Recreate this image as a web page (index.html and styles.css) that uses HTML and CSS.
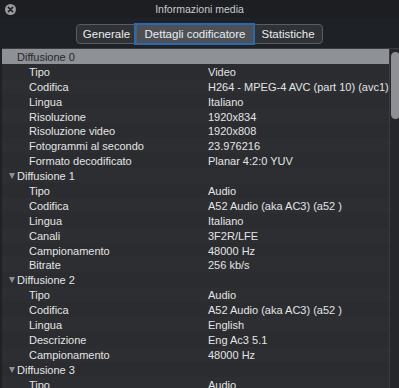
FILE: index.html
```html
<!DOCTYPE html>
<html lang="it">
<head>
<meta charset="utf-8">
<title>Informazioni media</title>
<link rel="stylesheet" href="styles.css">
</head>
<body>
<div class="window">
  <div class="titlebar">
    <div class="tb-left">
      <span class="close">
        <svg width="11" height="11" viewBox="0 0 11 11"><circle cx="5.5" cy="5.5" r="5.5" fill="#9a9ca0"/><path d="M3.4 3.4 L7.6 7.6 M7.6 3.4 L3.4 7.6" stroke="#1e2126" stroke-width="1.6" stroke-linecap="round"/></svg>
      </span>
    </div>
    <div class="title">Informazioni media</div>
    <div></div>
  </div>
  <div class="toolbar">
    <div class="segmented">
      <span class="seg s1">Generale</span>
      <span class="seg s2 active">Dettagli codificatore</span>
      <span class="seg s3">Statistiche</span>
    </div>
  </div>
  <div class="content">
    <div class="outline">
      <div class="row group selected"><span class="disc"></span><span class="k">Diffusione 0</span><span class="v"></span></div>
      <div class="row"><span class="k">Tipo</span><span class="v">Video</span></div>
      <div class="row"><span class="k">Codifica</span><span class="v">H264 - MPEG-4 AVC (part 10) (avc1)</span></div>
      <div class="row"><span class="k">Lingua</span><span class="v">Italiano</span></div>
      <div class="row"><span class="k">Risoluzione</span><span class="v">1920x834</span></div>
      <div class="row"><span class="k">Risoluzione video</span><span class="v">1920x808</span></div>
      <div class="row"><span class="k">Fotogrammi al secondo</span><span class="v">23.976216</span></div>
      <div class="row"><span class="k">Formato decodificato</span><span class="v">Planar 4:2:0 YUV</span></div>
      <div class="row group"><span class="disc"></span><span class="k">Diffusione 1</span><span class="v"></span></div>
      <div class="row"><span class="k">Tipo</span><span class="v">Audio</span></div>
      <div class="row"><span class="k">Codifica</span><span class="v">A52 Audio (aka AC3) (a52 )</span></div>
      <div class="row"><span class="k">Lingua</span><span class="v">Italiano</span></div>
      <div class="row"><span class="k">Canali</span><span class="v">3F2R/LFE</span></div>
      <div class="row"><span class="k">Campionamento</span><span class="v">48000 Hz</span></div>
      <div class="row"><span class="k">Bitrate</span><span class="v">256 kb/s</span></div>
      <div class="row group"><span class="disc"></span><span class="k">Diffusione 2</span><span class="v"></span></div>
      <div class="row"><span class="k">Tipo</span><span class="v">Audio</span></div>
      <div class="row"><span class="k">Codifica</span><span class="v">A52 Audio (aka AC3) (a52 )</span></div>
      <div class="row"><span class="k">Lingua</span><span class="v">English</span></div>
      <div class="row"><span class="k">Descrizione</span><span class="v">Eng Ac3 5.1</span></div>
      <div class="row"><span class="k">Campionamento</span><span class="v">48000 Hz</span></div>
      <div class="row group"><span class="disc"></span><span class="k">Diffusione 3</span><span class="v"></span></div>
      <div class="row"><span class="k">Tipo</span><span class="v">Audio</span></div>
    </div>
    <div class="scrollbar"><div class="thumb"></div></div>
  </div>
</div>
</body>
</html>
```

FILE: styles.css
```css
* { box-sizing: border-box; }
html, body {
  margin: 0;
  padding: 0;
  height: 100%;
  overflow: hidden;
  background: #1e2126;
}
body {
  font-family: "Liberation Sans", Arial, sans-serif;
  font-size: 11px;
  color: #e4e4e4;
}
.window {
  display: flex;
  flex-direction: column;
  height: 388px;
  background: #1e2126;
}
.titlebar {
  height: 18px;
  display: grid;
  grid-template-columns: 1fr auto 1fr;
  align-items: center;
  background: #1c1e22;
}
.tb-left {
  display: flex;
  align-items: center;
  padding-left: 5px;
}
.close {
  display: flex;
  width: 11px;
  height: 11px;
}
.title {
  color: #c9cacc;
  font-size: 10.5px;
}
.toolbar {
  height: 30px;
  display: flex;
  justify-content: center;
  align-items: flex-start;
  padding-top: 6px;
}
.segmented {
  display: flex;
  height: 20px;
  border: 1px solid #5a5c61;
  border-radius: 4px;
  background: #2f3236;
}
.seg {
  display: flex;
  align-items: center;
  justify-content: center;
  font-size: 11.5px;
  color: #ececec;
  border-left: 1px solid #5a5c61;
}
.seg.s1 { width: 59px; border-left: none; }
.seg.s2 { width: 117px; }
.seg.s3 { width: 69px; }
.seg.active {
  background: #4d5157;
  box-shadow: 0 0 0 2px #2b69ad;
  position: relative;
  z-index: 1;
}
.content {
  flex: 1;
  display: flex;
  margin-left: 2px;
  background: #2c2e32;
  border-top: 1px solid #3a3c40;
  overflow: hidden;
}
.outline {
  flex: 1;
  display: flex;
  flex-direction: column;
}
.row {
  flex: none;
  height: 14.9px;
  padding-top: 1px;
  display: flex;
  align-items: center;
  position: relative;
}
.row:nth-child(even) { background: #2a2c30; }
.row .k {
  width: 206px;
  padding-left: 27px;
  white-space: nowrap;
}
.row.group .k { padding-left: 0; width: 191px; }
.row .v { white-space: nowrap; }
.disc {
  width: 15px;
  height: 100%;
  display: flex;
  align-items: center;
  justify-content: center;
}
.disc::before {
  content: "";
  width: 0;
  height: 0;
  margin-left: 4px;
  border-left: 3.5px solid transparent;
  border-right: 3.5px solid transparent;
  border-top: 6px solid #8c8e92;
}
.row.selected {
  background: #8e9196;
  color: #26282b;
}
.row.selected .disc::before { border-top-color: #8e9196; }
.scrollbar {
  width: 13px;
  flex: none;
  background: #25272a;
  border-left: 1px solid #3a3c40;
  padding: 3px 1px 0 1px;
}
.thumb {
  height: 67px;
  background: #8e9095;
  border-radius: 5px;
  margin: 0 1px 0 0;
}
```
